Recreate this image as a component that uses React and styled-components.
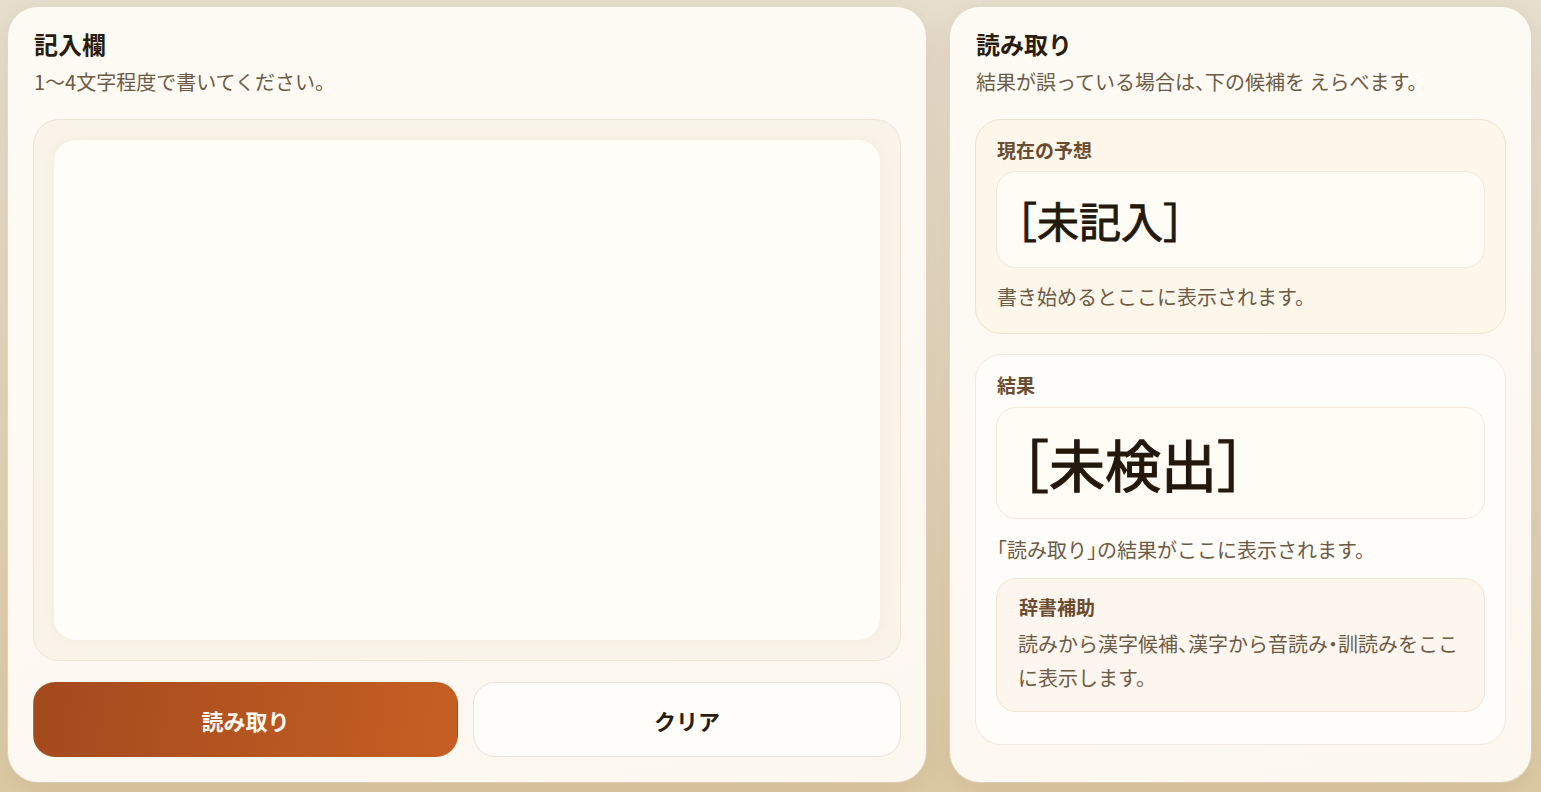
import React from "react";
import styled, { createGlobalStyle } from "styled-components";

const Global = createGlobalStyle`
  html, body { margin: 0; padding: 0; }
  body {
    font-family: "Noto Sans CJK JP", "Noto Sans", sans-serif;
    font-feature-settings: "halt" 1;
    background: linear-gradient(180deg, #e7dece 0%, #e2d5bd 50%, #dccaa5 100%);
    min-height: 792px;
    color: #2a1d10;
  }
  * { box-sizing: border-box; }
`;

const Page = styled.div`
  display: grid;
  grid-template-columns: minmax(0, 918fr) minmax(0, 581fr);
  gap: 24px;
  padding: 7px 10px 10px 8px;
  height: 792px;
`;

const Panel = styled.section`
  display: flex;
  flex-direction: column;
  background: linear-gradient(160deg, #fefbf5 0%, #fcf8f0 100%);
  border-radius: 30px;
  padding: 21px 25px 25px 25px;
  box-shadow: 0 0 0 1px rgba(230, 218, 198, 0.6), 0 10px 30px rgba(120, 90, 40, 0.12);
`;

const Title = styled.h2`
  margin: 0;
  font-size: 24px;
  line-height: 32px;
  font-weight: 700;
  color: #2a1d10;
  padding-left: 1px;
`;

const Sub = styled.p`
  margin: 8px 0 0 0;
  font-size: 20px;
  line-height: 28px;
  color: #6d5a45;
  padding-left: 1px;
`;

const CanvasWrap = styled.div`
  flex: 1;
  margin-top: 23px;
  border: 1px solid #efe3d6;
  border-radius: 26px;
  background: #f9f4ea;
  padding: 20px;
  display: flex;
`;

const Canvas = styled.div`
  flex: 1;
  border-radius: 22px;
  background: #fffdf7;
  box-shadow: 0 0 12px rgba(240, 228, 210, 0.6);
`;

const Buttons = styled.div`
  display: grid;
  grid-template-columns: 425fr 428fr;
  gap: 15px;
  margin-top: 21px;
`;

const Btn = styled.button`
  height: 75px;
  border-radius: 22px;
  font-family: inherit;
  font-feature-settings: "halt" 1;
  font-size: 22px;
  font-weight: 700;
  cursor: pointer;
  border: 1px solid ${(p) => (p.$primary ? "transparent" : "#ebe2d8")};
  color: ${(p) => (p.$primary ? "#fff8ef" : "#2a1d10")};
  background: ${(p) =>
    p.$primary ? "linear-gradient(100deg, #a34a1e 0%, #c65f23 100%)" : "#fffdfa"};
`;

const Card = styled.div`
  margin-top: ${(p) => p.$mt}px;
  border-radius: 26px;
  border: 1px solid ${(p) => (p.$warm ? "#f0e3cf" : "#f1e9de")};
  background: ${(p) => (p.$warm ? "#fdf6ea" : "#fffdf9")};
  padding: 18px 20px ${(p) => p.$pb}px 20px;
`;

const Label = styled.div`
  font-size: 19px;
  line-height: 24px;
  font-weight: 700;
  color: #6b4c30;
  padding-left: 1px;
`;

const ValueBox = styled.div`
  margin-top: ${(p) => p.$mt}px;
  height: ${(p) => p.$h}px;
  border-radius: 20px;
  border: 1px solid #f2e9dc;
  background: #fffcf6;
  display: flex;
  align-items: center;
  padding: 0 ${(p) => p.$px}px;
  font-size: ${(p) => p.$fs}px;
  line-height: 1;
  color: #24170b;
  font-weight: 400;
  -webkit-text-stroke: ${(p) => p.$stroke}px #24170b;
`;

const Note = styled.p`
  margin: ${(p) => p.$mt}px 0 0 0;
  font-size: 20px;
  line-height: 28px;
  color: #6d5a45;
  padding-left: 1px;
`;

const Dict = styled.div`
  margin-top: 14px;
  border-radius: 20px;
  border: 1px solid #f2e5d6;
  background: #fdf6ee;
  padding: 16px 20px 16px 21px;
`;

const DictText = styled.p`
  margin: 8px 0 0 0;
  font-size: 20px;
  line-height: 34px;
  color: #6d5a45;
`;

export default function App() {
  return (
    <>
      <Global />
      <Page>
        <Panel>
          <Title>記入欄</Title>
          <Sub>1〜4文字程度で書いてください。</Sub>
          <CanvasWrap>
            <Canvas />
          </CanvasWrap>
          <Buttons>
            <Btn $primary>読み取り</Btn>
            <Btn>クリア</Btn>
          </Buttons>
        </Panel>
        <Panel>
          <Title>読み取り</Title>
          <Sub>結果が誤っている場合は、下の候補を えらべます。</Sub>
          <Card $warm $mt={23} $pb={22}>
            <Label>現在の予想</Label>
            <ValueBox $mt={9} $h={97} $fs={42} $px={19} $stroke={0.9}>［未記入］</ValueBox>
            <Note $mt={15}>書き始めるとここに表示されます。</Note>
          </Card>
          <Card $mt={20} $pb={32}>
            <Label>結果</Label>
            <ValueBox $mt={10} $h={112} $fs={56} $px={24} $stroke={1.2}>［未検出］</ValueBox>
            <Note $mt={17}>「読み取り」の結果がここに表示されます。</Note>
            <Dict>
              <Label>辞書補助</Label>
              <DictText>読みから漢字候補、漢字から音読み・訓読みをここに表示します。</DictText>
            </Dict>
          </Card>
        </Panel>
      </Page>
    </>
  );
}
